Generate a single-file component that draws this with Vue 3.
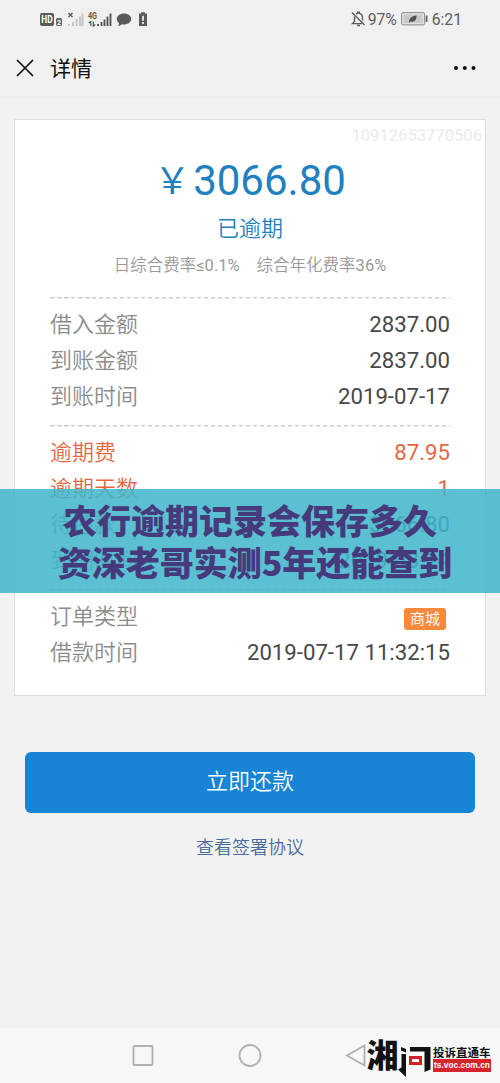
<script setup>
const groups = [
  [
    { label: '借入金额', value: '2837.00' },
    { label: '到账金额', value: '2837.00' },
    { label: '到账时间', value: '2019-07-17' }
  ],
  [
    { label: '逾期费', value: '87.95', warn: true },
    { label: '逾期天数', value: '1', warn: true },
    { label: '待还款', value: '3066.80' },
    { label: '到期时间', value: '2019-08-14' }
  ],
  [
    { label: '订单类型', tag: '商城' },
    { label: '借款时间', value: '2019-07-17 11:32:15' }
  ]
]
</script>

<template>
  <div class="screen">
    <header class="status">
      <svg class="status-left" width="112" height="18" viewBox="0 0 112 18">
        <rect x="0" y="3" width="14" height="13" rx="2" fill="#5a5a5a" />
        <text x="1.3" y="13" class="hd" textLength="11.4" lengthAdjust="spacingAndGlyphs">HD</text>
        <rect x="16" y="8" width="6" height="8" rx="1.5" fill="#666" />
        <text x="17" y="14.7" class="sim">2</text>
        <path d="M28.5 3l4 4M32.500 3l-4 4" stroke="#555" stroke-width="1.4" />
        <path d="M29 14v2M33 12v4M36.500 9v7M40 6.500v9.500M42.500 3.500v12.500" stroke="#c6c6c6" stroke-width="2" />
        <text x="48" y="9.300" class="net" textLength="9" lengthAdjust="spacingAndGlyphs">4G</text>
        <path d="M50.800 16v-4.500l-2 1.500M53.300 11.500v4.500l2-1.500" fill="none" stroke="#555" stroke-width="1.200" />
        <path d="M58 14v2M61.500 12v4M64.500 9.500v6.500M67.500 6.500v9.500M70.500 3.500v12.500" stroke="#555" stroke-width="1.900" />
        <path d="M84 3.500c4.100 0 7.200 2.400 7.200 5.500s-3.100 5.500-7.200 5.500c-.8 0-1.500-.1-2.200-.3-1.100 1-2.500 1.600-4 1.700.8-.8 1.300-1.800 1.200-2.900-1.400-1-2.200-2.400-2.200-4 0-3.100 3.100-5.500 7.200-5.500z" fill="#5a5a5a" />
        <path d="M99 3.500h2v-1.300h4v1.300h2v12.500h-8V3.500z" fill="#5a5a5a" />
        <path d="M103 5.800v5M103 12v2" stroke="#f0f0f0" stroke-width="1.700" />
      </svg>
      <div class="status-right">
        <svg width="15" height="16" viewBox="0 0 15 16" fill="none" stroke="#5c5c5c" stroke-width="1.400">
          <path d="M1 1.500l12.500 12.500M3.500 5.500v5L1.500 12.600H11M5 3.200c.6-.5 1.100-.7 1.700-.8V1.200h1.600v1.200c2 .4 3.200 1.900 3.200 4v3.200M6 14.500h3" />
        </svg>
        <span class="pct">97%</span>
        <svg class="battery" width="27" height="14" viewBox="0 0 27 14">
          <rect x=".6" y=".6" width="23" height="12.300" rx="1.500" fill="#e2e2e2" stroke="#8a8a8a" />
          <rect x="2.500" y="2.500" width="19" height="8.500" fill="#c8c8c8" />
          <path d="M24.700 3.500h1.800v6.500h-1.800z" fill="#666" />
          <path d="M8 11c0-4 2-7 7.500-7.500C16 7.500 13.500 10.500 9.500 9.500z" fill="#505050" />
        </svg>
        <span>6:21</span>
      </div>
    </header>

    <nav class="nav">
      <svg width="18" height="18" viewBox="0 0 18 18"><path d="M1 1l16 16M17 1L1 17" stroke="#111" stroke-width="1.700" /></svg>
      <h1>详情</h1>
      <svg class="more" width="24" height="6" viewBox="0 0 24 6" fill="#111">
        <circle cx="3" cy="3" r="2" /><circle cx="11.800" cy="3" r="2" /><circle cx="20.500" cy="3" r="2" />
      </svg>
    </nav>

    <main class="card">
      <div class="serial">10912653770506</div>
      <div class="amount"><span class="yen">￥</span>3066.80</div>
      <div class="state">已逾期</div>
      <div class="rates">
        <span>日综合费率<b>≤0.1%</b></span>
        <span>综合年化费率<b>36%</b></span>
      </div>
      <section v-for="(rows, i) in groups" :key="i" class="group">
        <div v-for="row in rows" :key="row.label" class="row" :class="{ warn: row.warn }">
          <span class="label">{{ row.label }}</span>
          <span v-if="row.tag" class="tag">{{ row.tag }}</span>
          <span v-else class="value">{{ row.value }}</span>
        </div>
      </section>
    </main>

    <button class="pay">立即还款</button>
    <a class="link">查看签署协议</a>

    <footer class="keys">
      <svg width="380" height="55" viewBox="0 0 380 55" fill="none" stroke="#b0b0b0" stroke-width="1.800">
        <rect x="133.500" y="18" width="19" height="19" rx="1" />
        <circle cx="250" cy="27.500" r="10.500" />
        <path d="M364.500 17.500v20L347 27.500z" />
      </svg>
    </footer>

    <div class="banner">
      <div>农行逾期记录会保存多久</div>
      <div class="second">资深老哥实测5年还能查到</div>
    </div>

    <div class="brand">
      <svg width="66" height="44" viewBox="0 0 66 44">
        <text class="mark" x="1.500" y="31">湘</text>
        <path d="M33 33.500l3.500-2V18H41v23z" fill="#111" />
        <path d="M36 11l5 2v3.500l-5-2z" fill="#111" />
        <path d="M45 11h20.500v22.500l-6 2.500V15.500H45z" fill="#111" />
        <rect x="45.500" y="21.500" width="10" height="6" fill="#f7f7f7" stroke="#d51f26" stroke-width="3" />
      </svg>
      <div class="brand-text">
        <strong>投诉直通车</strong>
        <span>ts.voc.com.cn</span>
      </div>
    </div>
  </div>
</template>

<style>
body { background: #f2f2f2; }
</style>

<style scoped>
.screen {
  position: relative;
  box-sizing: border-box;
  width: 500px;
  height: 1083px;
  display: flex;
  flex-direction: column;
  overflow: hidden;
  background: #f2f2f2;
  font-family: Roboto, "Noto Sans CJK SC", sans-serif;
  color: #444;
}
.status {
  height: 38px;
  padding: 0 38px 0 40px;
  display: flex;
  justify-content: space-between;
  align-items: center;
  background: #f0f0f0;
}
.hd { font: bold 10px Roboto, sans-serif; fill: #fff; }
.sim { font: bold 7px Roboto, sans-serif; fill: #fff; }
.net { font: bold 9px Roboto, sans-serif; fill: #555; }
.status-right {
  display: flex;
  align-items: center;
  font-size: 15.700px;
  color: #5c5c5c;
}
.pct { margin: 0 4px 0 2px; }
.battery { margin-right: 4px; }
.nav {
  box-sizing: border-box;
  height: 60px;
  padding: 0 23px 0 16px;
  display: flex;
  align-items: center;
  background: #f0f0f0;
  border-bottom: 1px solid #ececec;
}
.nav h1 {
  margin: 2px 0 0 16px;
  font-size: 21px;
  font-weight: 400;
  line-height: 30px;
  color: #111;
}
.more { margin-left: auto; }
.card {
  box-sizing: border-box;
  width: 472px;
  height: 577px;
  margin: 21px 0 0 14px;
  padding: 0 35px;
  background: #fff;
  border: 1px solid #dedede;
}
.serial {
  height: 30px;
  margin-right: -32px;
  text-align: right;
  font-size: 16.600px;
  line-height: 31px;
  color: #ebebeb;
}
.amount {
  height: 62px;
  display: flex;
  justify-content: center;
  font-size: 42px;
  line-height: 61px;
  color: #2180bf;
}
.yen {
  margin-right: 3px;
  font-size: 36px;
  line-height: 64px;
}
.state {
  height: 34px;
  text-align: center;
  font-size: 22px;
  font-weight: 350;
  line-height: 34px;
  color: #2180bf;
}
.rates {
  height: 51px;
  display: flex;
  justify-content: center;
  gap: 17px;
  font-size: 16.500px;
  line-height: 40px;
  font-weight: 350;
  color: #999;
}
.rates b { font-weight: 400; }
.group {
  padding: 10px 0;
  background: repeating-linear-gradient(90deg, #ccc 0 4.500px, transparent 4.500px 7px) top / 100% 1.500px no-repeat;
}
.row {
  height: 36px;
  display: flex;
  justify-content: space-between;
  align-items: center;
  font-size: 22px;
  line-height: 36px;
}
.label { color: #8c8c8c; font-weight: 350; }
.value {
  margin-top: -2px;
  color: #484848;
  font-size: 22.200px;
}
.warn .label, .warn .value { color: #e4683f; }
.tag {
  width: 42px;
  height: 22px;
  margin: 4px 4px 0 0;
  border-radius: 3px;
  background: #f58a3c;
  color: #fff;
  font-size: 15px;
  font-weight: 350;
  line-height: 22px;
  text-align: center;
}
.pay {
  height: 61px;
  margin: 56px 25px 0;
  padding: 0 0 7px;
  border: 0;
  border-radius: 6px;
  background: #1784d6;
  color: #fff;
  font: 350 22px/54px "Noto Sans CJK SC", sans-serif;
}
.link {
  margin-top: 19px;
  text-align: center;
  font-size: 18px;
  line-height: 32px;
  color: #476a9f;
  font-weight: 350;
}
.keys {
  height: 55px;
  margin-top: auto;
  background: #f7f7f7;
}
.banner {
  position: absolute;
  top: 489px;
  left: 0;
  box-sizing: border-box;
  width: 500px;
  height: 104px;
  padding-top: 10px;
  background: rgba(63, 182, 203, .86);
  color: #463a7c;
  font: 900 34px/42px "Noto Sans CJK SC", sans-serif;
  text-align: center;
  white-space: nowrap;
}
.second { padding-left: 10px; }
.brand {
  position: absolute;
  left: 365px;
  top: 1036px;
  display: flex;
  align-items: flex-start;
}
.brand svg { overflow: visible; }
.mark { font: 900 32px "Noto Sans CJK SC", sans-serif; fill: #111; }
.brand-text {
  width: 58px;
  margin: 10px 0 0 2px;
  display: flex;
  flex-direction: column;
}
.brand-text strong {
  font: 700 11.500px/13px "Noto Sans CJK SC", sans-serif;
  color: #111;
  white-space: nowrap;
}
.brand-text span {
  height: 13px;
  background: #d5242a;
  color: #fff;
  font: 700 8.400px/13px "Liberation Sans", sans-serif;
  text-align: center;
}
</style>
